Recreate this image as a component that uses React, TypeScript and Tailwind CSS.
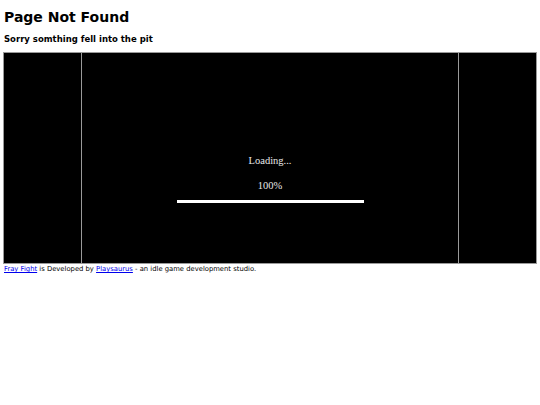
import React from 'react';

export default function App() {
  return (
    <div className="min-h-[405px] bg-white px-[3px] pt-[8px] font-['DejaVu_Sans',sans-serif] text-black">
      <h1 className="pl-px text-[14px] leading-[19px] font-bold">Page Not Found</h1>
      <h3 className="mt-[6px] pl-px text-[8.5px] leading-[12px] font-bold">Sorry somthing fell into the pit</h3>

      <div className="mt-[7px] flex h-[212px] w-[534px] border border-[#9a9a9a] bg-black">
        <div className="w-[77px]" />
        <div className="flex w-[378px] flex-col items-center border-x border-[#9a9a9a] pt-[101px] font-['Liberation_Serif',serif] text-[10.5px] text-[#e8e8e8]">
          <div className="leading-[13px]">Loading...</div>
          <div className="mt-[12px] leading-[13px]">100%</div>
          <div className="mt-[8px] h-[3px] w-[187px] bg-white" />
        </div>
        <div className="flex-1" />
      </div>

      <p className="pl-px text-[6.8px] leading-[10px]">
        <a href="#" className="text-[#0000ee] underline">Fray Fight</a> is Developed by{' '}
        <a href="#" className="text-[#0000ee] underline">Playsaurus</a> - an idle game development studio.
      </p>
    </div>
  );
}
